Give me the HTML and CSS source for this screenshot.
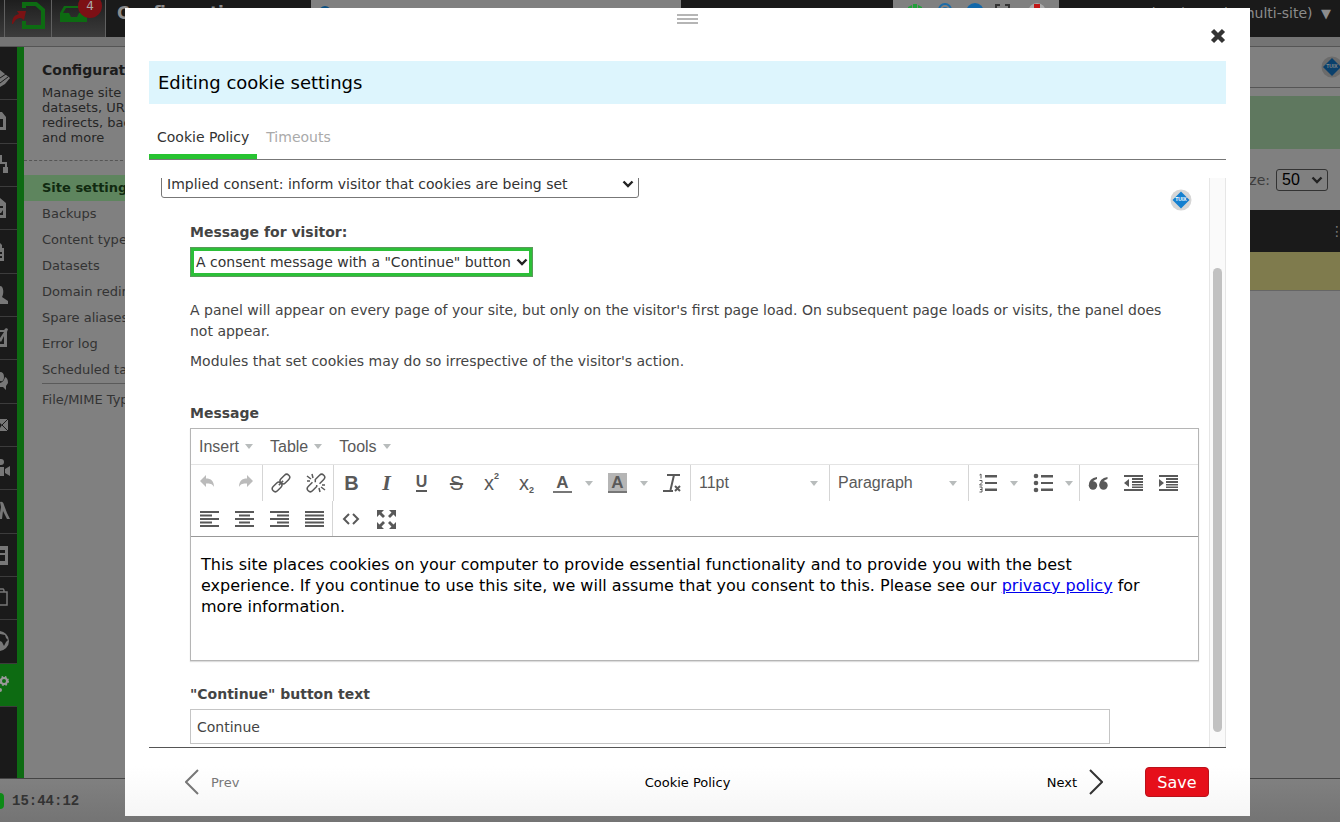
FILE: index.html
```html
<!DOCTYPE html>
<html lang="en">
<head>
<meta charset="utf-8">
<title>Editing cookie settings</title>
<link rel="stylesheet" href="styles.css">
</head>
<body>
<div class="app">
  <header class="topbar">
    <div class="tools">
      <span class="tool tool-edge"></span>
      <a class="tool tool-back" href="#page" aria-label="Back to page">
        <svg width="34" height="32" viewBox="0 0 34 32"><path d="M12 8V4H24L31 10V27H12V21" fill="none" stroke="#0d6b12" stroke-width="4"/><path d="M0 24C0 17 3 15 7 14L5 11L14 11L12 20L9 18C5 18 3 20 1 24Z" fill="#7a1214"/></svg>
      </a>
      <a class="tool tool-inbox" href="#inbox" aria-label="Inbox">
        <svg width="30" height="32" viewBox="0 0 30 32"><path d="M0 13L4 6H24L27 13V22H0ZM3 13H9L11 17H17L19 13H24L22 8H6Z" fill="#0d6b12" fill-rule="evenodd"/></svg>
        <span class="badge">4</span>
      </a>
    </div>
    <strong class="section">Configuration</strong>
    <div class="search"><svg width="12" height="12" viewBox="0 0 12 12"><circle cx="6" cy="6" r="5" fill="none" stroke="#0b4f80" stroke-width="2"/></svg></div>
    <div class="status">
      <svg width="166" height="20" viewBox="0 0 166 20"><path d="M15 7L19 5V8H20V4H24V8H25V5L29 7V16H15Z" fill="#22a03a"/><circle cx="52" cy="10" r="6" fill="none" stroke="#1c6ca8" stroke-width="2"/><circle cx="52" cy="10" r="3" fill="#1c6ca8"/><circle cx="82" cy="12" r="9" fill="#1268aa"/><path d="M103 9V5H107M112 5H116V9" fill="none" stroke="#333" stroke-width="2"/><circle cx="144" cy="12" r="9" fill="#aaa"/><path d="M141 4H147V12H141Z" fill="#c21818"/></svg>
    </div>
    <span class="user">Tony Butcher (zenario multi-site) <span class="arrow">▼</span></span>
  </header>
  <div class="workspace">
    <nav class="rail" aria-label="Sections">
      <span></span>
      <a href="#s1" aria-label="Content"><svg width="14" height="24" viewBox="0 0 14 24"><path d="M0 4L10 12L5 18L0 21Z"/><path d="M0 12L6 8M0 17L8 11" fill="none" stroke="#1a1a1a"/></svg></a>
      <a href="#s2" aria-label="Pages"><svg width="14" height="24" viewBox="0 0 14 24"><path d="M0 3H2L6 8V21H0V18H3V10H0Z"/></svg></a>
      <a href="#s3" aria-label="Menu"><svg width="14" height="24" viewBox="0 0 14 24"><path d="M0 2H2V9H7V14H8V20H3V14H5V11H0V20H-2Z"/></svg></a>
      <a href="#s4" aria-label="Documents"><svg width="14" height="24" viewBox="0 0 14 24"><path d="M0 2L6 7V22H0V19H3V10H0ZM0 12H3V14L1 17H0Z"/></svg></a>
      <a href="#s5" aria-label="Library"><svg width="14" height="24" viewBox="0 0 14 24"><path d="M0 4L2 6V9H4V22H0V19H2V17H0V15H2V13H0Z"/></svg></a>
      <a href="#s6" aria-label="Users"><svg width="14" height="24" viewBox="0 0 14 24"><path d="M0 3C4 3 4 11 2 14L8 18V21H0Z"/></svg></a>
      <a href="#s7" aria-label="Tasks"><svg width="14" height="24" viewBox="0 0 14 24"><path d="M0 4H4L6 2L8 3L7 6V21H0V18H4V10L1 16L0 15V12L4 6H0Z"/></svg></a>
      <a href="#s8" aria-label="Comments"><svg width="14" height="24" viewBox="0 0 14 24"><path d="M0 3Q4 3 4 8T0 12ZM5 8Q8 9 8 14L6 17V21L3 18H0V14Q4 13 5 8Z"/></svg></a>
      <a href="#s9" aria-label="Mail"><svg width="14" height="24" viewBox="0 0 14 24"><path d="M0 6H8V18H0V15L2 12L0 10Z"/><path d="M8 6L2 12L8 18" fill="none" stroke="#1a1a1a"/></svg></a>
      <a href="#s10" aria-label="Video"><svg width="14" height="24" viewBox="0 0 14 24"><circle cx="1" cy="6" r="3"/><path d="M0 11H4V20H0ZM5 13L10 10V20L5 17Z"/></svg></a>
      <a href="#s11" aria-label="Design"><svg width="14" height="24" viewBox="0 0 14 24"><path d="M0 3Q3 2 4 6L7 14L10 20H7L3 12L2 20H0V14L1 8Z"/></svg></a>
      <a href="#s12" aria-label="Layouts"><svg width="14" height="24" viewBox="0 0 14 24"><path d="M0 3H8V22H0ZM0 7V10H5V7ZM0 12V18H5V12Z" fill-rule="evenodd"/></svg></a>
      <a href="#s13" aria-label="Shop"><svg width="14" height="24" viewBox="0 0 14 24"><path d="M0 6H7V19H0M0 3H3Q4 3 4 6" fill="none" stroke="#777" stroke-width="1.5"/></svg></a>
      <a href="#s14" aria-label="Languages"><svg width="14" height="24" viewBox="0 0 14 24"><circle cx="-1" cy="12" r="10"/><path d="M0 5L5 6L6 9L8 11L6 13L4 17L2 13L0 12Z" fill="#1a1a1a"/></svg></a>
      <a class="rail-on" href="#s15" aria-label="Configuration"><svg width="14" height="24" viewBox="0 0 14 24"><circle cx="4" cy="8" r="3" fill="none" stroke="#999" stroke-width="2"/><circle cx="4" cy="8" r="4" fill="none" stroke="#999" stroke-width="2" stroke-dasharray="1.600 1.600"/><circle cx="0" cy="17" r="2"/></svg></a>
    </nav>
    <aside class="panel">
      <div class="panel-head">
        <h2>Configuration</h2>
        <p>Manage site datasets, URL redirects, backups and more</p>
      </div>
      <ul class="menu">
        <li class="menu-on"><a href="#settings">Site settings</a></li>
        <li><a href="#backups">Backups</a></li>
        <li><a href="#types">Content types</a></li>
        <li><a href="#datasets">Datasets</a></li>
        <li><a href="#redirects">Domain redirects</a></li>
        <li><a href="#aliases">Spare aliases</a></li>
        <li><a href="#errors">Error log</a></li>
        <li><a href="#scheduled">Scheduled tasks</a></li>
        <li class="menu-split"><a href="#mime">File/MIME Types</a></li>
      </ul>
    </aside>
    <main class="listing">
      <div class="crumbs">
        <svg width="22" height="22" viewBox="0 0 22 22"><circle cx="11" cy="11" r="10.5" fill="#6b6b6b"/><path d="M11 2L20 11L11 20L2 11Z" fill="#0a406c"/><text x="11" y="12" class="tuix tuix-dim">TUIX</text></svg>
      </div>
      <div class="notice"></div>
      <div class="pager"><label for="size">Page size:</label><select id="size"><option>50</option></select></div>
      <div class="thead">⋮</div>
      <div class="trow"></div>
    </main>
  </div>
  <footer class="statusbar"><span class="lamp"></span><time>15:44:12</time></footer>
</div>

<section class="dialog" role="dialog" aria-labelledby="dialog-title">
  <div class="grip"><i></i><i></i><i></i></div>
  <div class="closebar">
    <button class="close" type="button" aria-label="Close"><svg width="16" height="16" viewBox="0 0 16 16"><path d="M2.500 2.500L13.500 13.500M13.500 2.500L2.500 13.500" stroke="#333" stroke-width="4.400"/></svg></button>
  </div>
  <h1 class="title" id="dialog-title">Editing cookie settings</h1>
  <div class="tabs">
    <a class="tab tab-on" href="#policy">Cookie Policy</a>
    <a class="tab" href="#timeouts">Timeouts</a>
  </div>
  <div class="pane">
    <div class="form">
      <div class="consent-row">
        <select class="consent" aria-label="Consent type"><option>Implied consent: inform visitor that cookies are being set</option></select>
        <svg class="inspector" width="22" height="22" viewBox="0 0 22 22"><circle cx="11" cy="11" r="10.500" fill="#d6d6d6"/><path d="M11 2.500L19.500 11L11 19.500L2.500 11Z" fill="#1580d0"/><text x="11" y="12" class="tuix">TUIX</text></svg>
      </div>
      <div class="fields">
        <label class="label" for="visitor">Message for visitor:</label>
        <select class="visitor" id="visitor"><option>A consent message with a "Continue" button</option></select>
        <div class="help">
          <p>A panel will appear on every page of your site, but only on the visitor's first page load. On subsequent page loads or visits, the panel does not appear.</p>
          <p>Modules that set cookies may do so irrespective of the visitor's action.</p>
        </div>
        <span class="label">Message</span>
        <div class="editor">
          <div class="menubar">
            <button type="button">Insert<i class="tri"></i></button>
            <button type="button">Table<i class="tri"></i></button>
            <button type="button">Tools<i class="tri"></i></button>
          </div>
          <div class="toolbar">
            <div class="group">
              <button type="button" class="off" aria-label="Undo"><svg width="20" height="20" viewBox="0 0 20 20"><path d="M1 8L7 2V5.500C12 5.500 15 8 15 14C13 10.500 11 10.500 7 10.500V14Z"/></svg></button>
              <button type="button" class="off" aria-label="Redo"><svg width="20" height="20" viewBox="0 0 20 20"><path d="M19 8L13 2V5.500C8 5.500 5 8 5 14C7 10.500 9 10.500 13 10.500V14Z"/></svg></button>
            </div>
            <div class="group">
              <button type="button" aria-label="Link"><svg class="line" width="20" height="20" viewBox="0 0 20 20"><g transform="rotate(-45 10 10)"><rect x="-1" y="7" width="11" height="6" rx="3"/><rect x="10" y="7" width="11" height="6" rx="3"/><path d="M7 10H13"/></g></svg></button>
              <button type="button" aria-label="Remove link"><svg class="line" width="20" height="20" viewBox="0 0 20 20"><g transform="rotate(-45 10 10)"><path d="M8 7H2A3 3 0 0 0 2 13H8L9 12M12 13H18A3 3 0 0 0 18 7H12L10 9"/></g><path d="M6 1L7 5M1 3L5 6M1 8H4M13 15L14 19M15 14L19 17M16 12H19"/></svg></button>
            </div>
            <div class="group group-wide">
              <button type="button" class="g-bold" aria-label="Bold">B</button>
              <button type="button" class="g-italic" aria-label="Italic">I</button>
              <button type="button" class="g-under" aria-label="Underline"><span>U</span></button>
              <button type="button" class="g-strike" aria-label="Strikethrough">S</button>
              <button type="button" class="g-script" aria-label="Superscript">x<sup>2</sup></button>
              <button type="button" class="g-script" aria-label="Subscript">x<sub>2</sub></button>
              <button type="button" class="split" aria-label="Text colour"><span class="ink">A</span><i class="tri"></i></button>
              <button type="button" class="split" aria-label="Background colour"><span class="ink ink-fill">A</span><i class="tri"></i></button>
              <button type="button" aria-label="Clear formatting"><svg class="line heavy" width="20" height="20" viewBox="0 0 20 20"><path d="M5 2H18M12 2L8.500 17M1 18H11M13 13L18 18M18 13L13 18"/></svg></button>
            </div>
            <div class="group"><button type="button" class="list">11pt<i class="tri"></i></button></div>
            <div class="group"><button type="button" class="list">Paragraph<i class="tri"></i></button></div>
            <div class="group">
              <button type="button" class="split" aria-label="Numbered list"><svg width="20" height="20" viewBox="0 0 20 20"><path d="M7 2H19V4.500H7ZM7 9H19V11H7ZM7 15.500H19V18H7Z"/><path d="M1.500 2L3 1V5.500M1.500 7.500H4V9.500L1.500 12H4.500M1.500 14H4V19H1.500M2 16.500H4" fill="none" stroke="#595959" stroke-width="1"/></svg><i class="tri"></i></button>
              <button type="button" class="split" aria-label="Bullet list"><svg width="20" height="20" viewBox="0 0 20 20"><path d="M8 2H20V4.500H8ZM8 9H20V11H8ZM8 15.500H20V18H8Z"/><circle cx="3" cy="3" r="2.300"/><circle cx="3" cy="10" r="2.300"/><circle cx="3" cy="17" r="2.300"/></svg><i class="tri"></i></button>
            </div>
            <div class="group">
              <button type="button" aria-label="Blockquote"><svg width="20" height="20" viewBox="0 0 20 20"><circle cx="5" cy="12.500" r="4.200"/><circle cx="15.500" cy="12.500" r="4.200"/><path d="M.8 12.500Q.8 5 9 4V6Q5 7 4.500 10ZM11.300 12.500Q11.300 5 19.500 4V6Q15.500 7 15 10Z"/></svg></button>
              <button type="button" aria-label="Decrease indent"><svg width="20" height="20" viewBox="0 0 20 20"><path d="M1 2H20V4H1ZM9 5H20V7H9ZM9 8H20V10H9ZM9 11H20V12.500H9ZM9 13.500H20V15H9ZM1 16H20V18H1ZM1 10L6 6V14Z"/></svg></button>
              <button type="button" aria-label="Increase indent"><svg width="20" height="20" viewBox="0 0 20 20"><path d="M1 2H20V4H1ZM8 5H20V7H8ZM8 8H20V10H8ZM8 11H20V12.500H8ZM8 13.500H20V15H8ZM1 16H20V18H1ZM6 10L1 6V14Z"/></svg></button>
            </div>
          </div>
          <div class="toolbar toolbar-last">
            <div class="group">
              <button type="button" aria-label="Align left"><svg width="20" height="20" viewBox="0 0 20 20"><path d="M1 2H20V4H1ZM1 5.500H13V7.500H1ZM1 9H20V11H1ZM1 12.500H13V14.500H1ZM1 16H20V18H1Z"/></svg></button>
              <button type="button" aria-label="Align centre"><svg width="20" height="20" viewBox="0 0 20 20"><path d="M1 2H20V4H1ZM5 5.500H16V7.500H5ZM1 9H20V11H1ZM5 12.500H16V14.500H5ZM1 16H20V18H1Z"/></svg></button>
              <button type="button" aria-label="Align right"><svg width="20" height="20" viewBox="0 0 20 20"><path d="M1 2H20V4H1ZM8 5.500H20V7.500H8ZM1 9H20V11H1ZM8 12.500H20V14.500H8ZM1 16H20V18H1Z"/></svg></button>
              <button type="button" aria-label="Justify"><svg width="20" height="20" viewBox="0 0 20 20"><path d="M1 2H20V4H1ZM1 5.500H20V7.500H1ZM1 9H20V11H1ZM1 12.500H20V14.500H1ZM1 16H20V18H1Z"/></svg></button>
            </div>
            <div class="group">
              <button type="button" aria-label="Source code"><svg class="line heavy" width="20" height="20" viewBox="0 0 20 20"><path d="M8 5L3 10L8 15M12 5L17 10L12 15"/></svg></button>
              <button type="button" aria-label="Fullscreen"><svg width="20" height="20" viewBox="0 0 20 20"><path d="M1 1H8L5.500 3.500L9 7L7 9L3.500 5.500L1 8ZM20 1V8L17.500 5.500L14 9L12 7L15.500 3.500L13 1ZM1 20V13L3.500 15.500L7 12L9 14L5.500 17.500L8 20ZM20 20H13L15.500 17.500L12 14L14 12L17.500 15.500L20 13Z"/></svg></button>
            </div>
          </div>
          <div class="content" contenteditable="true" role="textbox" aria-label="Message">This site places cookies on your computer to provide essential functionality and to provide you with the best experience. If you continue to use this site, we will assume that you consent to this. Please see our <a href="#privacy">privacy policy</a> for more information.</div>
        </div>
        <label class="label" for="continue">"Continue" button text</label>
        <input class="field" id="continue" type="text" value="Continue">
      </div>
    </div>
    <div class="scrollbar"><div class="thumb"></div></div>
  </div>
  <div class="actions">
    <button type="button" class="step step-prev"><svg width="14" height="26" viewBox="0 0 14 26"><path d="M13 1L1 13L13 25"/></svg>Prev</button>
    <span class="where">Cookie Policy</span>
    <div class="forward">
      <button type="button" class="step">Next<svg width="14" height="26" viewBox="0 0 14 26"><path d="M1 1L13 13L1 25"/></svg></button>
      <button type="button" class="save">Save</button>
    </div>
  </div>
</section>
</body>
</html>
```
FILE: styles.css
```css
* { box-sizing: border-box; }
body {
  margin: 0;
  height: 100vh;
  overflow: hidden;
  font-family: "DejaVu Sans", sans-serif;
  font-size: 14px;
  color: #444;
}
h1, h2, p, ul { margin: 0; padding: 0; }
a { text-decoration: none; color: inherit; }
button { font: inherit; color: inherit; border: 0; background: none; padding: 0; }
svg { display: block; flex: none; }
.tuix { font: bold 5px "Liberation Sans", sans-serif; fill: #fff; text-anchor: middle; }
.tuix-dim { fill: #888; }

/* page behind the dialog */
.app { height: 100%; display: flex; flex-direction: column; background: #808080; }
.topbar { height: 37px; flex: none; display: flex; align-items: flex-start; background: #1a1a1a; }
.tools { display: flex; height: 37px; background: linear-gradient(#1e1e1e, #3c3c3c); }
.tool { display: flex; width: 47px; border-right: 1px solid #606060; }
.tool-edge { width: 5px; }
.tool-back { padding-left: 7px; }
.tool-inbox { width: 54px; padding-left: 8px; position: relative; }
.badge {
  position: absolute; left: 26px; top: -6px; width: 24px; height: 24px; border-radius: 12px;
  background: #7d1015; color: #aaa; font-size: 12px; line-height: 24px; text-align: center;
}
.section { width: 205px; padding-left: 11px; font-size: 17px; line-height: 26px; color: #8c8c8c; }
.search { width: 370px; height: 20px; background: #808080; padding: 6px 8px; }
.status { height: 20px; margin-left: 212px; background: #808080; }
.user { margin-left: auto; padding-right: 9px; font-size: 14px; line-height: 26px; color: #8c8c8c; white-space: nowrap; }
.arrow { font-size: 13px; margin-left: 4px; }
.workspace { flex: 1; display: flex; min-height: 0; margin-top: 9px; border-top: 1px solid #555; box-shadow: 0 -9px #747474; }
.rail {
  width: 24px; flex: none; display: grid; grid-template-rows: 10px repeat(15, 1fr) 71px;
  background: #1a1a1a; border-right: 7px solid #0d6b12;
}
.rail a { display: flex; align-items: center; border-bottom: 1px solid #3c3c3c; fill: #777; overflow: hidden; }
.rail .rail-on { background: #0d6b12; fill: #999; }
.panel { width: 200px; flex: none; }
.panel-head { height: 114px; padding: 14px 0 0 18px; border-bottom: 1px dashed #555; color: #262626; }
.panel-head h2 { font-size: 14px; line-height: 19px; color: #1c1c1c; }
.panel-head p { width: 130px; padding-top: 5px; font-size: 13px; line-height: 15px; }
.menu { list-style: none; padding-top: 14px; font-size: 13px; line-height: 26px; color: #333; }
.menu li { height: 26px; padding-left: 18px; white-space: nowrap; }
.menu .menu-on { background: #5e855e; font-weight: bold; color: #102a10; }
.menu .menu-split { height: 32px; margin: 0 0 0 18px; padding: 3px 0 0; border-top: 1px solid #5a5a5a; }
.listing { flex: 1; }
.crumbs { height: 41px; display: flex; justify-content: flex-end; padding-top: 9px; border-bottom: 1px solid #555; margin-right: -3px; }
.notice { height: 53px; margin-top: 8px; background: #5f785f; }
.pager { height: 61px; padding-right: 12px; display: flex; align-items: center; justify-content: flex-end; gap: 6px; color: #3c3c3c; }
.thead { height: 42px; margin-right: -4px; background: #1a1a1a; color: #777; text-align: right; line-height: 42px; }
.trow { height: 39px; background: #7f7b4d; border-bottom: 1px solid #666; }
.statusbar {
  height: 44px; flex: none; display: flex; align-items: center; gap: 8px; border-top: 1px solid #444;
  background: linear-gradient(#808080, #747474);
}
.lamp { width: 4px; height: 16px; border-radius: 0 8px 8px 0; background: #0d8a16; }
.statusbar time { font: bold 14px "Liberation Mono", monospace; color: #333; }

/* drop-downs */
select {
  appearance: none;
  font-family: inherit;
  font-size: 14px;
  color: #333;
  background: #fff url("data:image/svg+xml,%3Csvg xmlns='http://www.w3.org/2000/svg' width='12' height='8'%3E%3Cpath d='M1.500 1.500L6 6L10.500 1.500' fill='none' stroke='%23222' stroke-width='2.400'/%3E%3C/svg%3E") no-repeat right 4px center;
}
.pager select {
  width: 52px; height: 22px; padding: 0 5px; font: 16px "Liberation Sans", sans-serif; color: #000;
  background-color: #808080; border: 1px solid #333; border-radius: 3px;
}

/* dialog */
.dialog {
  position: fixed; top: 8px; right: 90px; bottom: 6px; left: 125px;
  display: flex; flex-direction: column; padding: 0 24px;
  background: linear-gradient(#fff calc(100% - 50px), #f6f6f6);
}
.grip { flex: none; height: 20px; padding-top: 6px; display: flex; flex-direction: column; align-items: center; gap: 2px; }
.grip i { width: 21px; height: 2px; background: #b5b5b5; }
.closebar { display: flex; justify-content: flex-end; height: 33px; flex: none; }
.close { height: 16px; }
.title { flex: none; padding: 0 9px; font-size: 18px; font-weight: normal; line-height: 43px; background: #ddf5fd; color: #000; }
.tabs { flex: none; display: flex; gap: 1px; height: 56px; border-bottom: 1px solid #777; }
.tab { padding: 23px 8px 0; line-height: 20px; color: #aaa; }
.tab-on { color: #333; border-bottom: 5px solid #28c332; }
.pane { flex: 1; min-height: 0; display: flex; margin-top: 18px; border-bottom: 1px solid #555; }
.form { flex: 1; min-width: 0; overflow: hidden; padding: 0 10px 0 12px; }
.consent-row { height: 20px; display: flex; align-items: flex-end; justify-content: space-between; padding-right: 7px; }
.consent-row .inspector { align-self: flex-start; margin-top: 11px; }
.consent { width: 478px; height: 28px; flex: none; padding: 0 5px; border: 1px solid #777; border-radius: 3px; }
.fields { padding: 24px 0 0 29px; display: flex; flex-direction: column; align-items: flex-start; }
.label { font-size: 14px; font-weight: bold; line-height: 20px; color: #444; }
.visitor { width: 343px; height: 30px; margin-top: 5px; padding: 0 5px; border: 1px solid #5a9a5a; box-shadow: inset 0 0 0 3px #2cbf38; }
.help { padding: 23px 20px 31px 0; line-height: 21px; }
.help p + p { margin-top: 9px; }
.editor { align-self: stretch; margin: 5px 0 23px; border: 1px solid #b5b5b5; box-shadow: 0 1px 1px #ddd; color: #595959; }
.menubar, .toolbar { display: flex; font: 16px "Liberation Sans", sans-serif; }
.menubar { height: 36px; padding: 0 8px; gap: 17px; border-bottom: 1px solid #e4e4e4; }
.menubar button { display: flex; align-items: center; gap: 6px; }
.tri { border: 4px solid transparent; border-top: 5px solid #b8bcbc; border-bottom: 0; }
.toolbar { height: 36px; }
.toolbar-last { height: 35px; }
.group { display: flex; border-left: 1px solid #d5d5d5; }
.group:first-child { border-left: 0; padding-right: 1px; }
.group-wide { padding-right: 1px; }
.group button { width: 35px; height: 100%; display: flex; align-items: center; justify-content: center; fill: #595959; }
.group .off { fill: #bbb; }
.line { fill: none; stroke: #595959; stroke-width: 1.5; }
.heavy { stroke-width: 2; }
.group .split { width: 55px; justify-content: space-between; padding: 0 6px 0 9px; }
.group .list { width: 138px; justify-content: space-between; padding: 0 11px 0 8px; }
.group .g-bold { font-size: 20px; font-weight: bold; }
.group .g-italic { font: italic bold 22px "Liberation Serif", serif; }
.g-under span { border-bottom: 2px solid #595959; line-height: 16px; }
.g-under { font-weight: bold; }
.group .g-strike { font-size: 20px; text-decoration: line-through; }
.group .g-script { font-size: 20px; }
.g-script sup, .g-script sub { font-size: 9px; font-weight: bold; }
.g-script sup { align-self: flex-start; padding-top: 6px; }
.g-script sub { align-self: flex-end; padding-bottom: 6px; }
.ink { width: 19px; height: 20px; border-bottom: 2px solid #777; font-size: 17px; font-weight: bold; line-height: 19px; text-align: center; }
.ink-fill { background: #b5b5b5; }
.content { min-height: 124px; padding: 17px 40px 17px 10px; border-top: 1px solid #999; font-size: 16px; line-height: 21px; color: #000; }
.content a { color: #0000ee; text-decoration: underline; }
.field { width: 920px; max-width: 100%; height: 35px; margin-top: 5px; padding: 0 6px; border: 1px solid #c5c5c5; font: inherit; color: #444; }
.scrollbar { width: 17px; flex: none; padding: 90px 3px 15px; background: #fafafa; border: solid #e6e6e6; border-width: 0 1px; }
.thumb { height: 100%; border-radius: 5px; background: #c1c1c1; }
.actions { flex: none; height: 68px; display: grid; grid-template-columns: 1fr auto 1fr; align-items: center; font-size: 13px; color: #000; }
.step { display: flex; align-items: center; gap: 12px; }
.step svg { fill: none; stroke: #333; stroke-width: 2; }
.step-prev { padding-left: 36px; color: #777; }
.step-prev svg { stroke: #777; }
.forward { display: flex; justify-content: flex-end; align-items: center; gap: 42px; padding-right: 17px; }
.save { width: 64px; height: 30px; border: 1px solid #b9121b; border-radius: 4px; background: #e60f1a; color: #fff; font-size: 16px; }
```
